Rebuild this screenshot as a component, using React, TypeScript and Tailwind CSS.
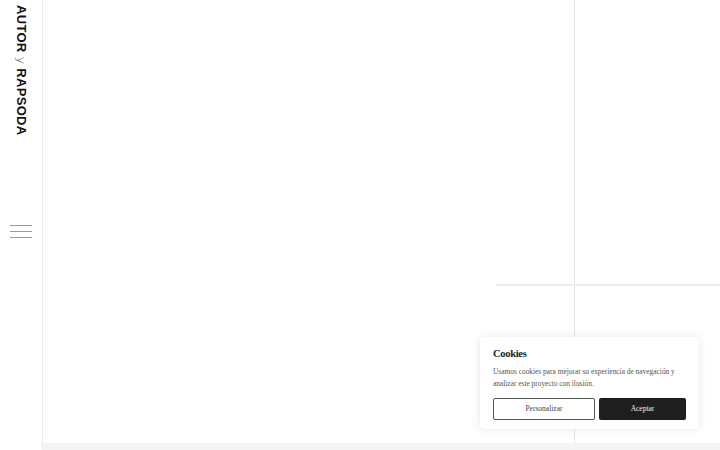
export default function App() {
  return (
    <div className="relative flex h-[450px] w-[720px] overflow-hidden bg-white">
      {/* Sidebar */}
      <aside className="flex h-full w-[43px] shrink-0 flex-col items-center border-r border-[#ececec]">
        <div
          className="mt-[5px] whitespace-nowrap pl-[1px] text-[13px] font-bold leading-none tracking-[0.3px] text-[#111]"
          style={{ writingMode: 'vertical-rl', fontFamily: '"Liberation Sans", Arial, sans-serif' }}
        >
          AUTOR{' '}
          <span className="font-light text-[#555]" style={{ fontFamily: '"DejaVu Sans", sans-serif', fontWeight: 200 }}>
            y
          </span>{' '}
          RAPSODA
        </div>
        <div className="mt-[90px] flex w-[22px] flex-col gap-[5px] pr-[2px]">
          <span className="block h-[1px] w-[22px] bg-[#9a9a9a]" />
          <span className="block h-[1px] w-[22px] bg-[#9a9a9a]" />
          <span className="block h-[1px] w-[22px] bg-[#9a9a9a]" />
        </div>
      </aside>

      {/* Main */}
      <main className="flex flex-1 flex-col">
        <div className="flex h-[443px]">
          <div className="w-[453px]" />
          <div className="flex flex-1 flex-col">
            <div className="flex h-[284px]">
              <div className="w-[78px]" />
              <div className="flex-1 border-l border-[#e3e3e3]" />
            </div>
            <div className="h-[2px] bg-[#ededed]" />
            <div className="flex flex-1">
              <div className="w-[78px]" />
              <div className="flex-1 border-l border-[#e3e3e3]" />
            </div>
          </div>
        </div>
        <div className="flex-1 bg-[#f5f5f5]" />
      </main>

      {/* Cookie banner */}
      <div
        className="absolute bottom-[21px] right-[21px] w-[219px] rounded-[4px] bg-white pb-[9px] pl-[13px] pr-[12px] pt-[10px] shadow-[0_0_8px_rgba(0,0,0,0.10)]"
        style={{ fontFamily: '"Liberation Serif", Georgia, serif' }}
      >
        <h2 className="text-[10.5px] font-semibold leading-[13px] tracking-[-0.3px] text-[#222]">Cookies</h2>
        <p className="mt-[6px] text-[7.4px] leading-[12px] text-[#555]">
          Usamos cookies para mejorar su experiencia de navegación y analizar este proyecto con ilusión.
        </p>
        <div className="mt-[8px] flex gap-[4px]">
          <button className="h-[22px] w-[102px] rounded-[2px] border-[1.5px] border-[#555] bg-white text-[7.5px] text-[#444]">
            Personalizar
          </button>
          <button className="h-[22px] w-[87px] rounded-[2px] bg-[#1e1e1e] text-[7.5px] text-[#eee]">
            Aceptar
          </button>
        </div>
      </div>
    </div>
  );
}
